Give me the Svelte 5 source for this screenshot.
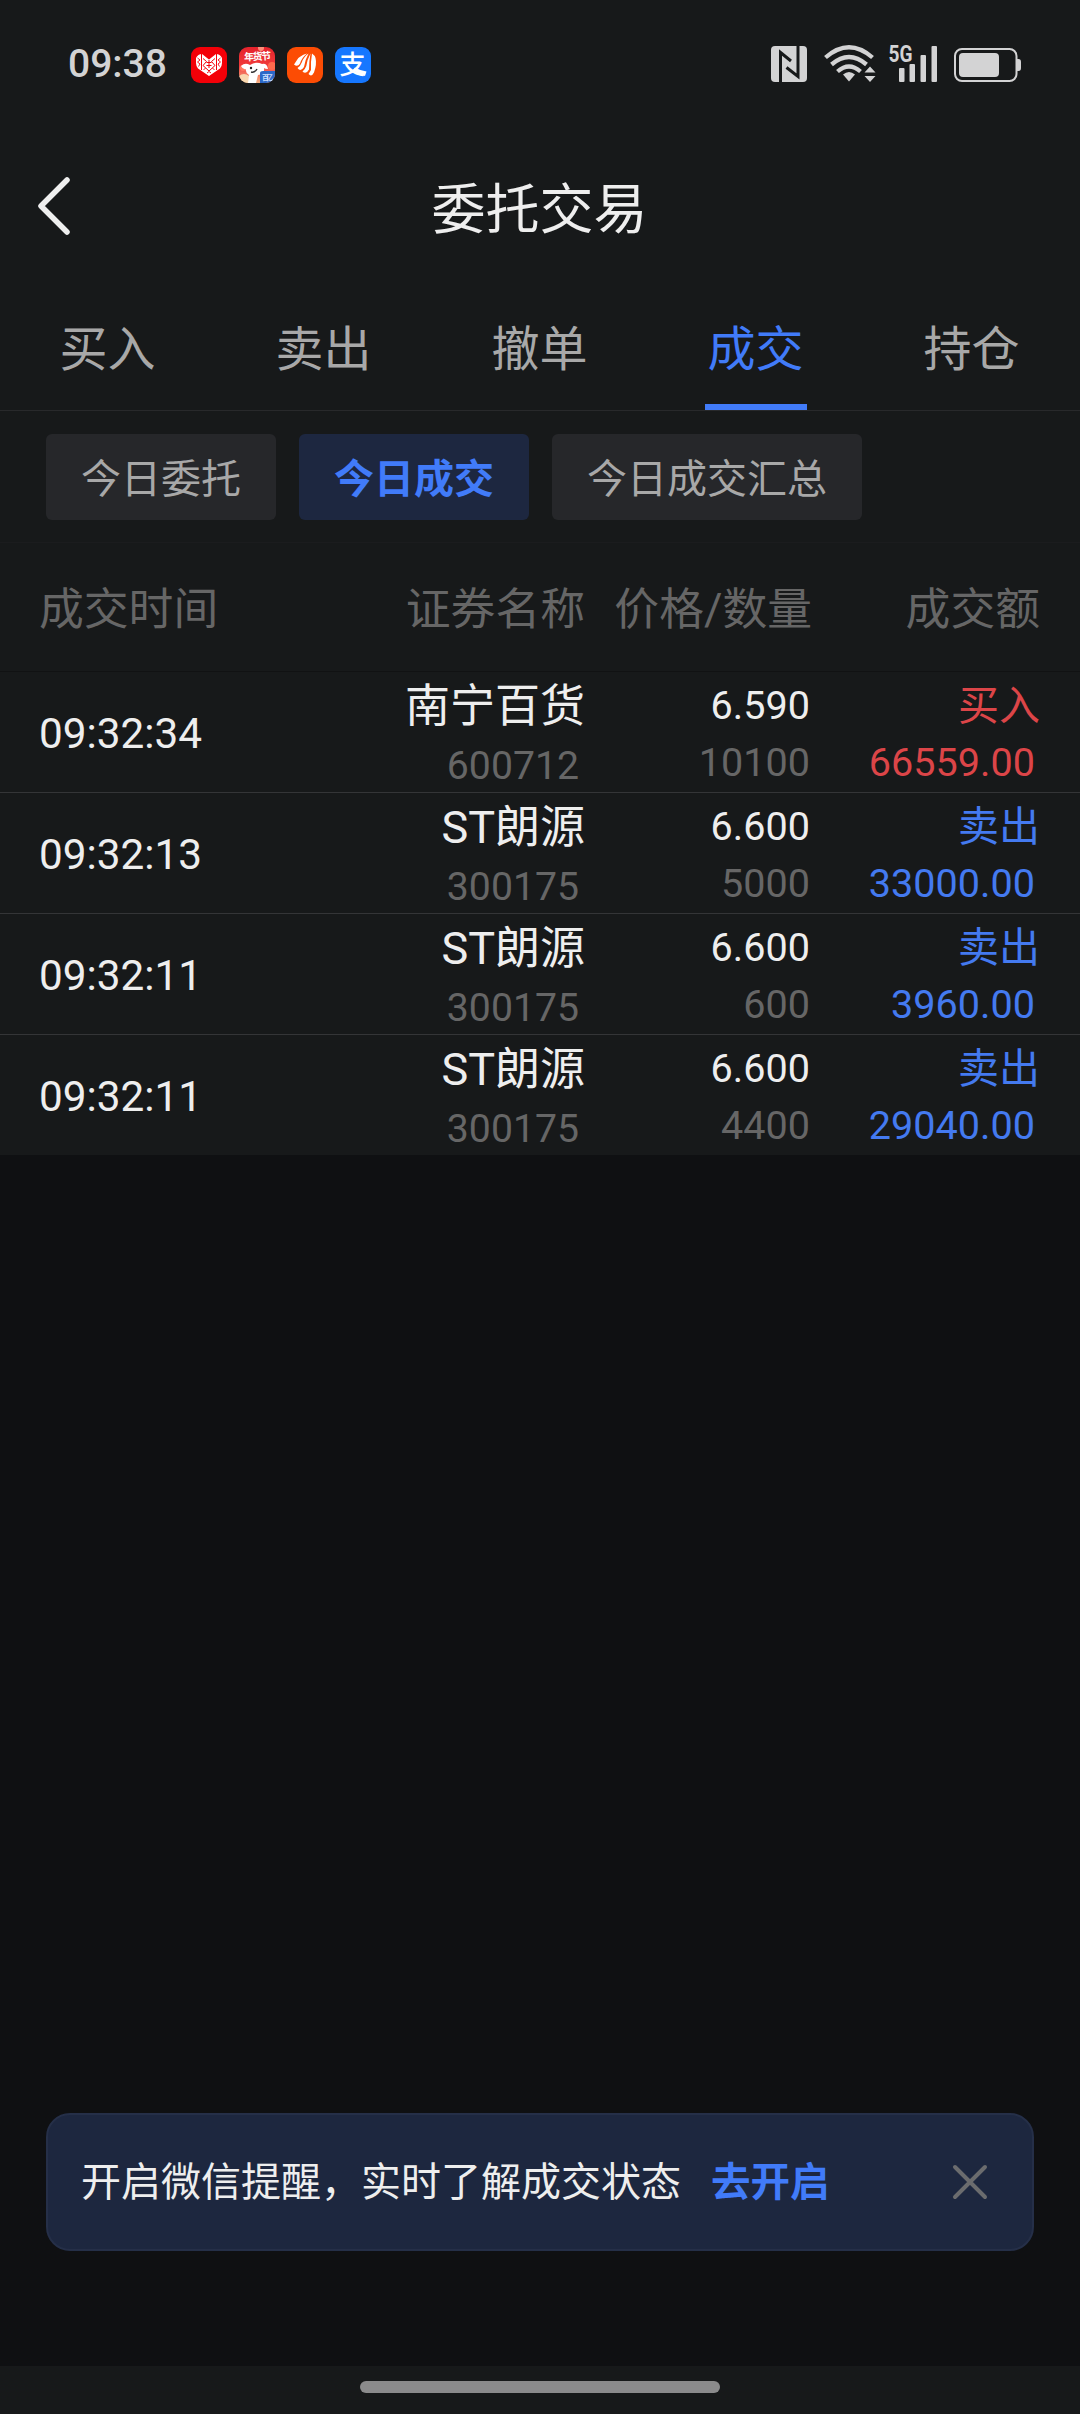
<script lang="ts">
	type Trade = {
		time: string;
		name: string;
		code: string;
		price: string;
		qty: number;
		side: 'buy' | 'sell';
		amount: string;
	};

	const tabs = ['买入', '卖出', '撤单', '成交', '持仓'];
	const filters = ['今日委托', '今日成交', '今日成交汇总'];

	const trades: Trade[] = [
		{ time: '09:32:34', name: '南宁百货', code: '600712', price: '6.590', qty: 10100, side: 'buy', amount: '66559.00' },
		{ time: '09:32:13', name: 'ST朗源', code: '300175', price: '6.600', qty: 5000, side: 'sell', amount: '33000.00' },
		{ time: '09:32:11', name: 'ST朗源', code: '300175', price: '6.600', qty: 600, side: 'sell', amount: '3960.00' },
		{ time: '09:32:11', name: 'ST朗源', code: '300175', price: '6.600', qty: 4400, side: 'sell', amount: '29040.00' }
	];

	let activeTab = $state('成交');
	let activeFilter = $state('今日成交');
	let showNotice = $state(true);
</script>

<div class="screen">
	<div class="status">
		<span class="clock">09:38</span>
		<div class="apps">
			<svg width="36" height="36" viewBox="0 0 36 36">
				<rect width="36" height="36" rx="9" fill="#f30008" />
				<path d="M18 29 7 21.500Q5 19 5 16V11Q7 7 11 7L18 12.500 25 7Q29 7 31 11V16Q31 19 29 21.500Z" fill="#fff" />
				<path d="M10.500 7v16M25.500 7v16" stroke="#f30008" stroke-width="1" />
				<path d="M12 11.500l3.500 3-3.500 4 6 5.500 6-5.500-3.500-4 3.500-3M15.500 15.500h5M15.500 18.500h5M18 13v8" stroke="#f30008" stroke-width="1" fill="none" />
				<path d="M6.500 11l2.500 2-2.500 2 2.500 2-1.500 2.500M29.500 11 27 13l2.500 2L27 17l1.500 2.500M12.500 22.500l2-1M23.500 22.500l-2-1M16 26l2-1.500 2 1.500" stroke="#f30008" stroke-width=".9" fill="none" />
			</svg>
			<svg width="36" height="36" viewBox="0 0 36 36">
				<defs>
					<clipPath id="app-clip"><rect width="36" height="36" rx="9" /></clipPath>
					<linearGradient id="app-bg" x1="0" y1="0" x2="0" y2="1">
						<stop offset="0" stop-color="#e5222c" />
						<stop offset=".5" stop-color="#f03a3a" />
						<stop offset="1" stop-color="#f7b183" />
					</linearGradient>
				</defs>
				<g clip-path="url(#app-clip)">
					<rect width="36" height="36" fill="url(#app-bg)" />
					<circle cx="22" cy="1" r="3" fill="#ff8c78" />
					<circle cx="33" cy="19" r="4" fill="#ff6a4d" />
					<circle cx="4" cy="21" r="3" fill="#ff7a62" />
					<path d="M0 29q5-4 10 0l4 7H0z" fill="#f9d9b0" />
					<path d="M2 19q4-4 9-1 6-4 12-1 5-1 6 5-3 0-4-1 1 6-6 7l-2 8H9l1-8q-4-3-3-6-3 1-5-3z" fill="#fff" />
					<circle cx="12" cy="21" r="1.200" fill="#222" />
					<path d="M12 25q4 1 6-3" stroke="#333" stroke-width="1.400" fill="none" />
					<text class="festival" x="5" y="13" textLength="27" transform="rotate(-3 18 10)">年货节</text>
					<path d="M21 26q0-2 3-2h12v12H21z" fill="#2c68c8" />
					<text class="badge" x="23" y="33" textLength="11">百亿</text>
				</g>
			</svg>
			<svg width="36" height="36" viewBox="0 0 36 36">
				<rect width="36" height="36" rx="9" fill="#fc4c04" />
				<g fill="#fff">
					<path d="M20 6.500Q12 9 10 13L7 17.500Q10.500 20.500 13 16.500 14.500 11 20 6.500z" />
					<path d="M21.500 6.500Q16.500 10 15 15 13.500 19 10.500 21 13.500 25.500 17 20 18 13 21.500 6.500z" />
					<path d="M23.500 6.500Q20 13 19.300 19 18 22.500 15.500 24.500 19 28 22 22.500 22 14 23.500 6.500z" />
					<path d="M25 6.500Q23.500 15 24 23L21.500 27Q24.500 30.500 27 25.500 30 17 28.500 11 28 8.500 25 6.500z" />
				</g>
			</svg>
			<svg width="36" height="36" viewBox="0 0 36 36">
				<rect width="36" height="36" rx="9" fill="#1677ff" />
				<text class="pay" x="17.500" y="27">支</text>
				<path d="M20 20.500q5 3 11.500 4l-1.500 4.500q-6-1.500-12-5.500z" fill="#fff" />
			</svg>
		</div>
		<div class="signals">
			<svg width="252" height="48" viewBox="770 40 252 48" fill="#d3d3d4">
				<rect x="771" y="46" width="36" height="36" rx="4" />
				<path d="M780.500 82V52.500L791 61M798 46v30.500L786.500 67.500" fill="none" stroke="#17191a" stroke-width="3" />
				<g fill="none" stroke="#d3d3d4" stroke-width="4.300">
					<path d="M825.500 57.500Q849 37 872.500 57.500" />
					<path d="M831.500 64.500Q849 49.500 866.500 64.500" />
					<path d="M837.500 71.500Q849 61.500 860.500 71.500" />
				</g>
				<path d="M843 74.500q6-5 12 0L849 81.500z" />
				<path d="M864.500 72.500 870 66.500 875.500 72.500zM864.500 76 870 82 875.500 76z" stroke="#17191a" stroke-width="1.200" paint-order="stroke" />
				<text class="net" x="888.500" y="61.500" textLength="24" lengthAdjust="spacingAndGlyphs">5G</text>
				<rect x="899" y="68" width="5.500" height="14" rx="1" />
				<rect x="909.500" y="64" width="5.500" height="18" rx="1" />
				<rect x="920.500" y="55" width="5.500" height="27" rx="1" />
				<rect x="931.500" y="46" width="5.500" height="36" rx="1" />
				<rect x="955" y="49" width="61.500" height="32" rx="7" fill="none" stroke="#d3d3d4" stroke-width="2" />
				<rect x="959" y="53" width="40" height="24" rx="4" />
				<path d="M1017 59h1.500q2.500 0 2.500 3v6q0 3-2.500 3H1017z" />
			</svg>
		</div>
	</div>

	<header>
		<svg class="back" width="40" height="64" viewBox="0 0 40 64" fill="none" stroke="#efefef" stroke-width="5.500" stroke-linecap="round" stroke-linejoin="round">
			<path d="M32 6 6 32 32 58" />
		</svg>
		<h1>委托交易</h1>
	</header>

	<nav>
		{#each tabs as tab}
			<button class="tab" class:active={tab === activeTab} onclick={() => (activeTab = tab)}>
				<span>{tab}</span>
			</button>
		{/each}
	</nav>

	<div class="filters">
		{#each filters as filter}
			<button class="chip" class:active={filter === activeFilter} onclick={() => (activeFilter = filter)}>
				{filter}
			</button>
		{/each}
	</div>

	<div class="row head">
		<span>成交时间</span>
		<span>证券名称</span>
		<span>价格/数量</span>
		<span>成交额</span>
	</div>

	{#each trades as trade}
		<div class="row trade">
			<div class="time">{trade.time}</div>
			<div class="stock">
				<div class="name">{trade.name}</div>
				<div class="code">{trade.code}</div>
			</div>
			<div class="deal">
				<div class="price">{trade.price}</div>
				<div class="qty">{trade.qty}</div>
			</div>
			<div class="total {trade.side}">
				<div class="side">{trade.side === 'buy' ? '买入' : '卖出'}</div>
				<div class="amount">{trade.amount}</div>
			</div>
		</div>
	{/each}

	<main>
		{#if showNotice}
			<div class="notice">
				<span>开启微信提醒，实时了解成交状态</span>
				<b>去开启</b>
				<button class="close" aria-label="关闭" onclick={() => (showNotice = false)}>
					<svg width="38" height="38" viewBox="0 0 38 38" stroke="#6b6c6e" stroke-width="4" stroke-linecap="round">
						<path d="M4 4 34 34M34 4 4 34" />
					</svg>
				</button>
			</div>
		{/if}
	</main>

	<footer><i></i></footer>
</div>

<style>
	:global(body) {
		background: #0f1012;
	}

	.screen {
		display: flex;
		flex-direction: column;
		width: 1080px;
		height: 2414px;
		background: #17191a;
		color: #eee;
		font-family: Roboto, "Noto Sans CJK SC", sans-serif;
		overflow: hidden;
	}

	svg {
		display: block;
	}

	button {
		border: 0;
		padding: 0;
		margin: 0;
		background: none;
		font: inherit;
		color: inherit;
	}

	.status {
		display: flex;
		align-items: center;
		height: 130px;
		padding: 0 58px 0 68px;
		box-sizing: border-box;
	}

	.clock {
		width: 123px;
		font-size: 39px;
		line-height: 46px;
		font-weight: 500;
		color: #d3d3d4;
		padding-bottom: 3px;
	}

	.apps {
		display: flex;
		gap: 12px;
	}

	.festival {
		font-size: 10px;
		font-weight: 700;
		fill: #fff;
	}

	.badge {
		font-size: 7px;
		font-weight: 700;
		fill: #cfe0ff;
	}

	.pay {
		font-size: 26px;
		font-weight: 500;
		fill: #fff;
		text-anchor: middle;
	}

	.signals {
		margin-left: auto;
		padding-bottom: 2px;
	}

	.net {
		font-size: 23px;
		font-weight: 700;
	}

	header {
		display: grid;
		grid-template-columns: 140px 1fr 140px;
		align-items: center;
		height: 156px;
	}

	.back {
		margin: -5px 0 0 35px;
	}

	h1 {
		margin: 6px 0 0;
		padding-right: 1px;
		font-size: 54px;
		line-height: 70px;
		font-weight: 400;
		text-align: center;
	}

	nav {
		display: flex;
		height: 124px;
		border-bottom: 1px solid #28292b;
	}

	.tab {
		flex: 1;
		display: flex;
		justify-content: center;
		font-size: 48px;
		line-height: 127px;
		color: #a8a8a8;
	}

	.tab span {
		box-sizing: border-box;
		height: 124px;
		padding: 0 3px 0 2px;
	}

	.tab.active {
		color: #417bf9;
	}

	.tab.active span {
		border-bottom: 6px solid #417bf9;
	}

	.filters {
		display: flex;
		gap: 23px;
		height: 132px;
		box-sizing: border-box;
		padding: 23px 46px;
		border-bottom: 1px solid #1b1c1e;
	}

	.chip {
		height: 86px;
		padding: 0 35px;
		border-radius: 6px;
		background: #26272a;
		color: #a8a8a8;
		font-size: 40px;
		line-height: 91px;
		overflow: hidden;
	}

	.chip.active {
		background: #1d2740;
		color: #417bf9;
		font-weight: 700;
	}

	.row {
		display: grid;
		grid-template-columns: 346px 200px 227px 228px;
		padding-left: 39px;
		box-sizing: border-box;
		text-align: right;
	}

	.row > :first-child {
		text-align: left;
	}

	.head {
		height: 129px;
		font-size: 44.8px;
		line-height: 134px;
		color: #666;
		border-bottom: 1px solid #111213;
	}

	.trade {
		height: 121px;
		line-height: 52px;
		font-size: 39.6px;
		box-sizing: border-box;
		border-bottom: 1px solid #343537;
	}

	.trade:last-of-type {
		height: 120px;
		border-bottom: 0;
	}

	.time {
		font-size: 42.3px;
		line-height: 123px;
	}

	.name {
		margin-top: 9px;
		font-size: 45px;
	}

	.code {
		margin-top: 7px;
		padding-right: 6px;
		color: #666;
		font-size: 39.2px;
	}

	.deal {
		padding-right: 2px;
	}

	.price {
		margin-top: 8px;
	}

	.qty,
	.amount {
		margin-top: 5px;
	}

	.qty {
		color: #666;
	}

	.side {
		margin-top: 8px;
		font-size: 41px;
	}

	.amount {
		padding-right: 5px;
	}

	.buy {
		color: #dc4548;
	}

	.sell {
		color: #447af0;
	}

	main {
		flex: 1;
		display: flex;
		align-items: flex-end;
		padding: 0 46px 115px;
		background: #0f1012;
	}

	.notice {
		flex: 1;
		display: flex;
		align-items: center;
		height: 138px;
		box-sizing: border-box;
		padding: 0 43px 0 33px;
		border: 2px solid #252f48;
		border-radius: 24px;
		background: #1d273f;
		font-size: 40px;
		line-height: 60px;
	}

	.notice span,
	.notice b {
		padding-top: 2px;
	}

	.notice b {
		margin-left: 30px;
		color: #417bf9;
		font-size: 39.5px;
	}

	.close {
		margin-left: auto;
	}

	footer {
		display: flex;
		justify-content: center;
		height: 48px;
		box-sizing: border-box;
		padding-top: 15px;
	}

	footer i {
		width: 360px;
		height: 12px;
		border-radius: 6px;
		background: #8b8b8c;
	}
</style>
